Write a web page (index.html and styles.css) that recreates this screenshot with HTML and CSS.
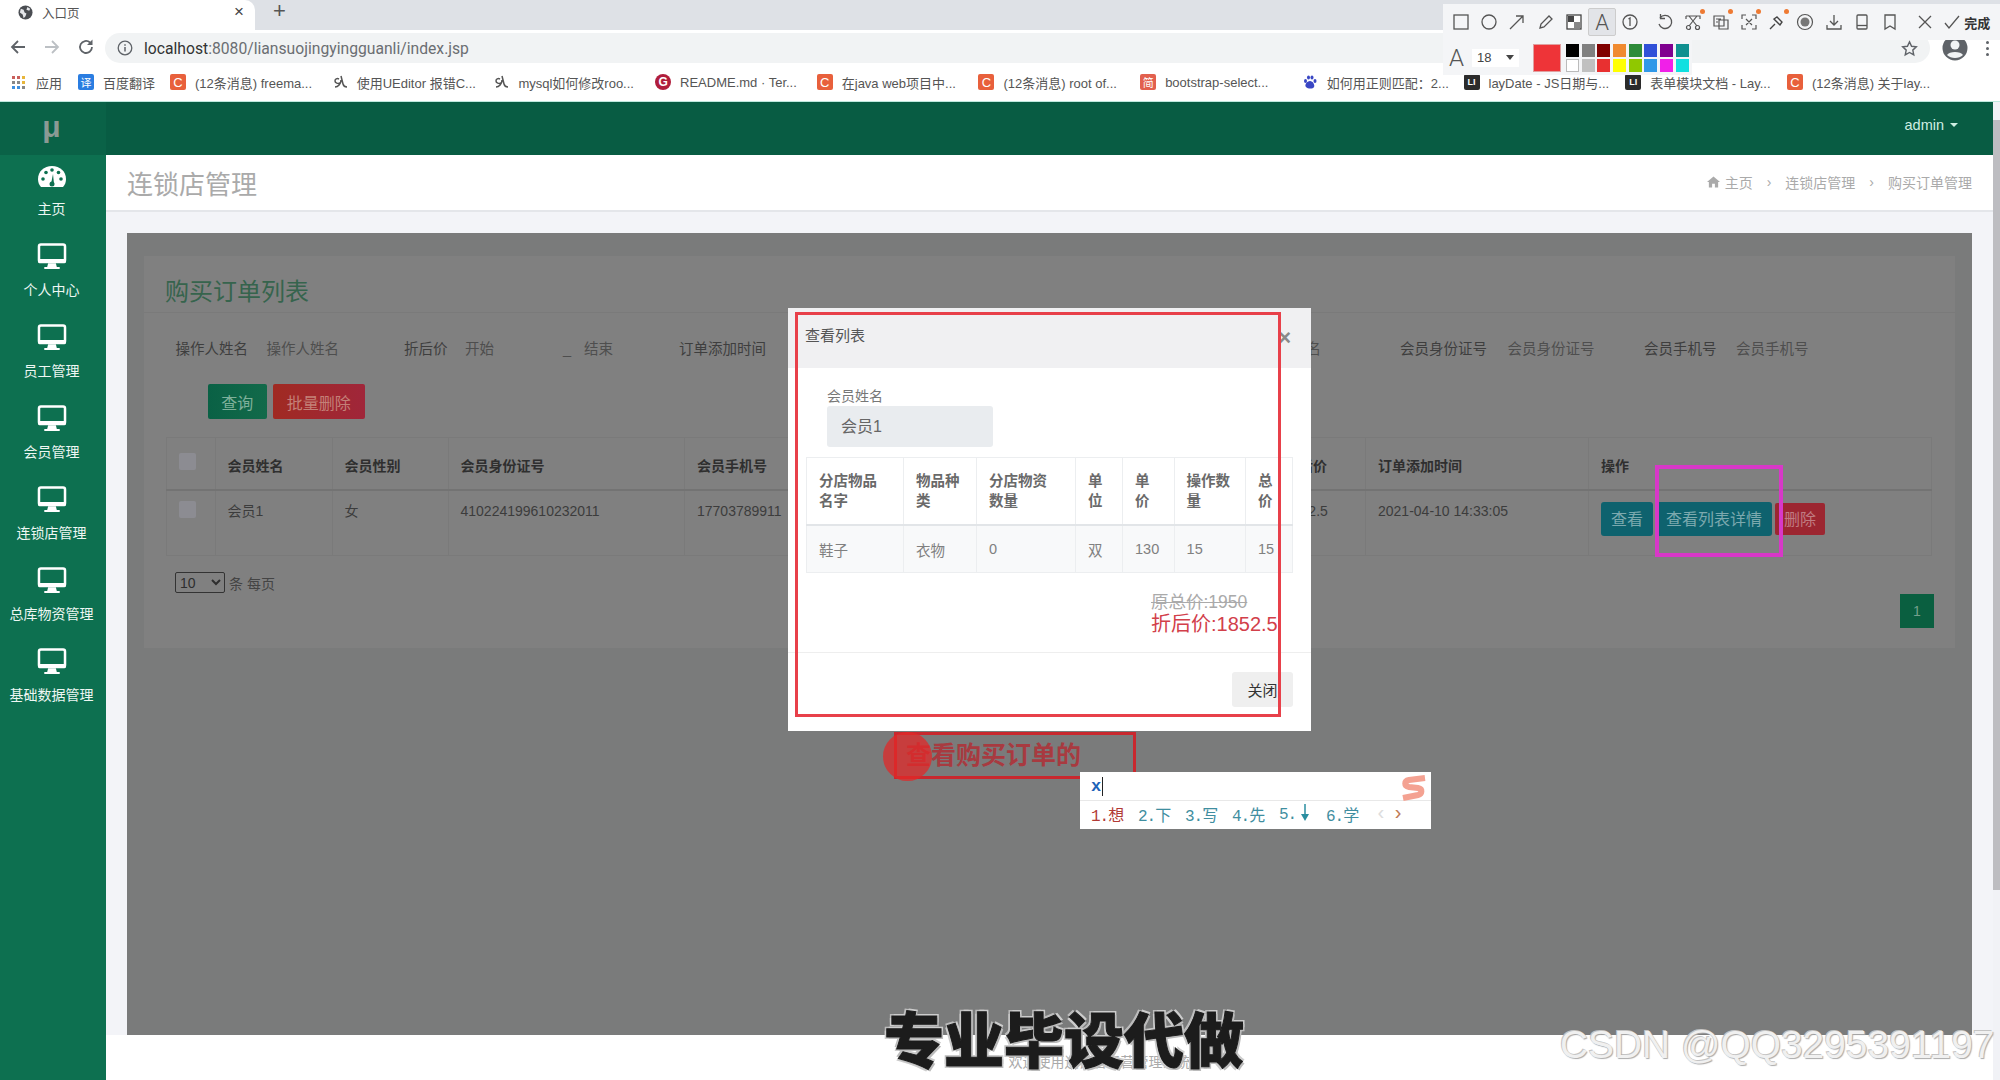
FILE: index.html
```html
<!DOCTYPE html>
<html lang="zh">
	<head>
		<meta charset="UTF-8" />
		<title>入口页</title>
		<link rel="stylesheet" href="styles.css">
	</head>
	<body>
		<svg class="sprites" width="0" height="0">
			<symbol id="monitor" viewBox="0 0 30 28">
				<rect x="1.5" y="1.5" width="27" height="18" rx="2" fill="none" stroke="#fff" stroke-width="2.6"/>
				<rect x="0.5" y="16.5" width="29" height="4.5" rx="1.5" fill="#fff"/>
				<path d="M11 21h8l1 4h3v2H7v-2h3z" fill="#fff"/>
			</symbol>
			<symbol id="gauge" viewBox="0 0 30 27">
				<path d="M4 25C2 23 1 20 1 17 1 9.500 7 4 15 4s14 5.500 14 13c0 3-1 6-3 8z" fill="#fff"/>
				<circle cx="6" cy="17" r="1.800" fill="#0d7050"/>
				<circle cx="9" cy="10.500" r="1.800" fill="#0d7050"/>
				<circle cx="15" cy="8" r="1.800" fill="#0d7050"/>
				<circle cx="21.500" cy="10.500" r="1.800" fill="#0d7050"/>
				<circle cx="24" cy="17" r="1.800" fill="#0d7050"/>
				<path d="M14 22l2-10 1 10z" fill="#0d7050"/>
				<circle cx="15" cy="22" r="2.500" fill="#0d7050"/>
			</symbol>
			<symbol id="swirl" viewBox="0 0 16 16">
				<path d="M3 13c3 0 6-3 6-7M9 2l2 8c.5 2 2 3 4 3M7 5c-2-1-4 0-4 2s3 3 5 2" fill="none" stroke="#555" stroke-width="1.500"/>
			</symbol>
		</svg>

		<div class="tabstrip">
			<div class="tab">
				<svg class="globe" width="15" height="15" viewBox="0 0 16 16"><circle cx="8" cy="8" r="7.500" fill="#4a4d52"/><path d="M3 4l3 1 1 3 2 1-1 3-2 2-1-4-3-2zM10 2l3 2-1 2-3-1z" fill="#e4e6ea"/></svg>
				<span class="tab-title">入口页</span>
				<span class="tab-close">×</span>
			</div>
			<span class="tab-new">+</span>
		</div>

		<div class="toolbar">
			<svg class="nav-icon" width="18" height="18" viewBox="0 0 18 18"><path d="M16 9H3M9 3L3 9l6 6" fill="none" stroke="#5f6368" stroke-width="1.800"/></svg>
			<svg class="nav-icon" width="18" height="18" viewBox="0 0 18 18"><path d="M2 9h13M9 3l6 6-6 6" fill="none" stroke="#bcc0c4" stroke-width="1.800"/></svg>
			<svg class="nav-icon" width="18" height="18" viewBox="0 0 18 18"><path d="M15 9a6 6 0 1 1-2-4.500" fill="none" stroke="#5f6368" stroke-width="1.800"/><path d="M15.500 1.500V7H10z" fill="#5f6368"/></svg>
			<div class="omnibox">
				<svg width="16" height="16" viewBox="0 0 16 16"><circle cx="8" cy="8" r="6.800" fill="none" stroke="#5f6368" stroke-width="1.300"/><path d="M8 7v4.500M8 4.200v1.600" stroke="#5f6368" stroke-width="1.500"/></svg>
				<span class="url"><b>localhost</b>:8080/liansuojingyingguanli/index.jsp</span>
				<svg class="star" width="17" height="17" viewBox="0 0 18 18"><path d="M9 2l2.200 4.700 5 .6-3.700 3.400 1 5L9 13.200l-4.500 2.500 1-5L1.800 7.300l5-.6z" fill="none" stroke="#5f6368" stroke-width="1.500"/></svg>
			</div>
			<svg class="avatar" width="26" height="26" viewBox="0 0 26 26"><circle cx="13" cy="13" r="12.500" fill="#5f6368"/><circle cx="13" cy="10" r="4.500" fill="#f1f3f4"/><path d="M5 20c2-4 14-4 16 0-4 4-12 4-16 0z" fill="#f1f3f4"/></svg>
			<span class="menu-dots"><i></i><i></i><i></i></span>
		</div>

		<div class="bookmarks">
			<div class="bm bm-apps"><span class="apps-grid"><i></i><i></i><i></i><i></i><i></i><i></i><i></i><i></i><i></i></span><span>应用</span></div>
			<div class="bm bm-first"><span class="fav fav-blue">译</span><span>百度翻译</span></div>
			<div class="bm"><span class="fav fav-c">C</span><span>(12条消息) freema...</span></div>
			<div class="bm"><svg class="fav" viewBox="0 0 16 16"><use href="#swirl"/></svg><span>使用UEditor 报错C...</span></div>
			<div class="bm"><svg class="fav" viewBox="0 0 16 16"><use href="#swirl"/></svg><span>mysql如何修改roo...</span></div>
			<div class="bm"><span class="fav fav-g">G</span><span>README.md · Ter...</span></div>
			<div class="bm"><span class="fav fav-c">C</span><span>在java web项目中...</span></div>
			<div class="bm"><span class="fav fav-c">C</span><span>(12条消息) root of...</span></div>
			<div class="bm"><span class="fav fav-jian">简</span><span>bootstrap-select...</span></div>
			<div class="bm"><svg class="fav" viewBox="0 0 16 16"><g fill="#3a47c4"><ellipse cx="3.500" cy="7" rx="1.500" ry="2"/><ellipse cx="6.500" cy="3.500" rx="1.500" ry="2"/><ellipse cx="10" cy="3.500" rx="1.500" ry="2"/><ellipse cx="13" cy="7" rx="1.500" ry="2"/><path d="M8 7c3 0 5 4 4 6s-6 2-8 0 1-6 4-6z"/></g></svg><span>如何用正则匹配：2...</span></div>
			<div class="bm"><span class="fav fav-li">LI</span><span>layDate - JS日期与...</span></div>
			<div class="bm"><span class="fav fav-li">LI</span><span>表单模块文档 - Lay...</span></div>
			<div class="bm"><span class="fav fav-c">C</span><span>(12条消息) 关于lay...</span></div>
		</div>

		<div class="app">
			<aside class="sidebar">
				<div class="logo">μ</div>
				<nav class="side-nav">
					<a class="side-item"><svg width="30" height="27"><use href="#gauge"/></svg><span>主页</span></a>
					<a class="side-item"><svg width="30" height="27"><use href="#monitor"/></svg><span>个人中心</span></a>
					<a class="side-item"><svg width="30" height="27"><use href="#monitor"/></svg><span>员工管理</span></a>
					<a class="side-item"><svg width="30" height="27"><use href="#monitor"/></svg><span>会员管理</span></a>
					<a class="side-item"><svg width="30" height="27"><use href="#monitor"/></svg><span>连锁店管理</span></a>
					<a class="side-item"><svg width="30" height="27"><use href="#monitor"/></svg><span>总库物资管理</span></a>
					<a class="side-item"><svg width="30" height="27"><use href="#monitor"/></svg><span>基础数据管理</span></a>
				</nav>
			</aside>

			<div class="main">
				<header class="topbar">
					<span class="user">admin</span>
					<span class="caret"></span>
				</header>
				<div class="subheader">
					<h2>连锁店管理</h2>
					<div class="crumbs">
						<svg width="13" height="12" viewBox="0 0 14 12"><path d="M7 0l7 6h-2v6H8.500V8h-3v4H2V6H0z" fill="#aaa"/></svg>
						<span>主页</span>
						<span class="crumb-sep">›</span>
						<span>连锁店管理</span>
						<span class="crumb-sep">›</span>
						<span>购买订单管理</span>
					</div>
				</div>

				<div class="content">
					<div class="frame">
						<section class="card">
							<h3 class="card-title">购买订单列表</h3>
							<div class="filters">
								<span>操作人姓名</span><span class="ph">操作人姓名</span>
								<span>折后价</span><span class="ph">开始</span><span class="ph">_</span><span class="ph">结束</span>
								<span>订单添加时间</span><span class="ph">会员姓名</span>
								<span>会员身份证号</span><span class="ph">会员身份证号</span>
								<span>会员手机号</span><span class="ph">会员手机号</span>
							</div>
							<div class="filter-actions">
								<button class="btn btn-green">查询</button>
								<button class="btn btn-red">批量删除</button>
							</div>
							<table class="orders">
								<colgroup>
									<col class="c-check"><col class="c-name"><col class="c-sex"><col class="c-id"><col class="c-phone"><col class="c-price"><col class="c-time"><col>
								</colgroup>
								<thead>
									<tr>
										<th><span class="check"></span></th>
										<th>会员姓名</th>
										<th>会员性别</th>
										<th>会员身份证号</th>
										<th>会员手机号</th>
										<th>折后价</th>
										<th>订单添加时间</th>
										<th>操作</th>
									</tr>
								</thead>
								<tbody>
									<tr>
										<td><span class="check"></span></td>
										<td>会员1</td>
										<td>女</td>
										<td>410224199610232011</td>
										<td>17703789911</td>
										<td>1852.5</td>
										<td>2021-04-10 14:33:05</td>
										<td>
											<div class="row-actions">
												<button class="btn btn-teal btn-view">查看</button>
												<button class="btn btn-teal btn-detail">查看列表详情</button>
												<button class="btn btn-del">删除</button>
											</div>
										</td>
									</tr>
								</tbody>
							</table>
							<div class="pager">
								<div class="per-page">
									<select><option>10</option></select>
									<span>条 每页</span>
								</div>
								<a class="page-btn">1</a>
							</div>
						</section>

						<div class="modal">
							<div class="modal-head">
								<span>查看列表</span>
								<span class="modal-close">×</span>
							</div>
							<div class="modal-body">
								<label>会员姓名</label>
								<div class="readonly">会员1</div>
								<table class="items">
									<colgroup>
										<col class="i1"><col class="i2"><col class="i3"><col class="i4"><col class="i5"><col class="i6"><col>
									</colgroup>
									<thead>
										<tr>
											<th>分店物品<br>名字</th>
											<th>物品种<br>类</th>
											<th>分店物资<br>数量</th>
											<th>单<br>位</th>
											<th>单<br>价</th>
											<th>操作数<br>量</th>
											<th>总<br>价</th>
										</tr>
									</thead>
									<tbody>
										<tr><td>鞋子</td><td>衣物</td><td>0</td><td>双</td><td>130</td><td>15</td><td>15</td></tr>
									</tbody>
								</table>
								<div class="totals">
									<del>原总价:1950</del>
									<strong>折后价:1852.5</strong>
								</div>
							</div>
							<div class="modal-foot">
								<button class="btn-close">关闭</button>
							</div>
						</div>
					</div>
				</div>

				<footer class="footer">欢迎使用连锁店经营管理系统</footer>
			</div>

			<div class="scrollbar"><div class="scroll-thumb"></div></div>
		</div>

		<!-- stuff from the screen recorder, sits on top of the page -->
		<div class="shot-tool">
			<div class="shot-row">
				<span class="ti"><svg width="18" height="18" viewBox="0 0 18 18"><rect x="2" y="2" width="14" height="14" fill="none" stroke="#555" stroke-width="1.300"/></svg></span>
				<span class="ti"><svg width="18" height="18" viewBox="0 0 18 18"><circle cx="9" cy="9" r="7" fill="none" stroke="#555" stroke-width="1.300"/></svg></span>
				<span class="ti"><svg width="18" height="18" viewBox="0 0 18 18"><path d="M2 16L15 3M8 3h7v7" fill="none" stroke="#555" stroke-width="1.300"/></svg></span>
				<span class="ti"><svg width="18" height="18" viewBox="0 0 18 18"><path d="M3 15l1-4 8-8 3 3-8 8z" fill="none" stroke="#555" stroke-width="1.300"/></svg></span>
				<span class="ti"><svg width="16" height="16" viewBox="0 0 16 16"><rect x="1" y="1" width="14" height="14" fill="#fff" stroke="#444" stroke-width="1.300"/><rect x="2" y="2" width="6" height="6" fill="#444"/><rect x="8" y="8" width="6" height="6" fill="#888"/></svg></span>
				<span class="ti ti-on">A</span>
				<span class="ti"><svg width="18" height="18" viewBox="0 0 18 18"><circle cx="9" cy="9" r="7" fill="none" stroke="#555" stroke-width="1.300"/><path d="M7.500 6L9 5v8" fill="none" stroke="#555" stroke-width="1.300"/></svg></span>
				<span class="ti-sep"></span>
				<span class="ti"><svg width="18" height="18" viewBox="0 0 18 18"><path d="M5 5a6.500 6.500 0 1 1-1 6" fill="none" stroke="#555" stroke-width="1.300"/><path d="M5.500 1v4.500H10" fill="none" stroke="#555" stroke-width="1.300"/></svg></span>
				<span class="ti dot"><svg width="18" height="18" viewBox="0 0 18 18"><path d="M2 3h14v3M2 3v3M5 3l8 10M13 3L5 13" fill="none" stroke="#555" stroke-width="1.200"/><circle cx="4.500" cy="14.500" r="2" fill="none" stroke="#555" stroke-width="1.200"/><circle cx="13.500" cy="14.500" r="2" fill="none" stroke="#555" stroke-width="1.200"/></svg></span>
				<span class="ti dot"><svg width="18" height="18" viewBox="0 0 18 18"><path d="M2 3h10v10H2zM7 7h9v9H7zM4 6h5M4 9h2" fill="none" stroke="#555" stroke-width="1.200"/></svg></span>
				<span class="ti dot"><svg width="18" height="18" viewBox="0 0 18 18"><path d="M2 6V2h4M16 6V2h-4M2 12v4h4M16 12v4h-4M6 6l6 6M12 6l-6 6" fill="none" stroke="#555" stroke-width="1.200"/></svg></span>
				<span class="ti dot"><svg width="18" height="18" viewBox="0 0 18 18"><path d="M2 16l5-5M6 6l6 6M9 4l5 5-2 3-6-6z" fill="none" stroke="#444" stroke-width="1.400"/></svg></span>
				<span class="ti"><svg width="18" height="18" viewBox="0 0 18 18"><circle cx="9" cy="9" r="7.500" fill="none" stroke="#555" stroke-width="1.200"/><circle cx="9" cy="9" r="4.500" fill="#777"/></svg></span>
				<span class="ti"><svg width="18" height="18" viewBox="0 0 18 18"><path d="M9 2v9M5 8l4 4 4-4M2 12v4h14v-4" fill="none" stroke="#555" stroke-width="1.300"/></svg></span>
				<span class="ti"><svg width="18" height="18" viewBox="0 0 18 18"><rect x="4" y="2" width="10" height="14" rx="1" fill="none" stroke="#555" stroke-width="1.300"/><path d="M4 12.500h10" stroke="#555" stroke-width="1.300"/></svg></span>
				<span class="ti"><svg width="18" height="18" viewBox="0 0 18 18"><path d="M4 2h10v14l-5-3-5 3z" fill="none" stroke="#555" stroke-width="1.300"/></svg></span>
				<span class="ti-sep ti-sep-wide"></span>
				<span class="ti"><svg width="16" height="16" viewBox="0 0 16 16"><path d="M2 2l12 12M14 2L2 14" stroke="#555" stroke-width="1.300"/></svg></span>
				<span class="ti ti-done"><svg width="16" height="16" viewBox="0 0 16 16"><path d="M1 9l4 5L15 2" fill="none" stroke="#555" stroke-width="1.300"/></svg><b>完成</b></span>
			</div>
			<div class="shot-opts">
				<span class="opt-a">A</span>
				<span class="opt-size">18<i></i></span>
				<span class="opt-current"></span>
				<div class="palette">
					<i class="p-black"></i><i class="p-gray"></i><i class="p-maroon"></i><i class="p-orange"></i><i class="p-green"></i><i class="p-blue"></i><i class="p-purple"></i><i class="p-teal"></i>
					<i class="p-white"></i><i class="p-silver"></i><i class="p-red"></i><i class="p-yellow"></i><i class="p-lime"></i><i class="p-sky"></i><i class="p-pink"></i><i class="p-cyan"></i>
				</div>
			</div>
		</div>

		<div class="mark-red"></div>
		<div class="mark-pink"></div>
		<div class="mark-note"><span class="mark-text">查看购买订单的</span><span class="mark-dot"></span></div>

		<div class="ime">
			<div class="ime-input"><b>x</b></div>
			<div class="ime-list">
				<span class="first">1.想</span><span>2.下</span><span>3.写</span><span>4.先</span>
				<span>5.<svg width="10" height="18" viewBox="0 0 10 18"><path d="M5 0v12" stroke="#2b8ea0" stroke-width="1.500"/><path d="M1 10h8l-4 7z" fill="#2b8ea0"/></svg></span>
				<span>6.学</span>
				<em class="ime-prev">‹</em><em class="ime-next">›</em>
			</div>
			<svg class="ime-logo" width="33" height="33" viewBox="0 0 33 33"><path d="M27 7L11 9c-5 1-5 6 0 7l9 1c5 1 4 6 0 7L5 27" fill="none" stroke="#f4a292" stroke-width="6"/></svg>
		</div>

		<div class="promo">专业毕设代做</div>
		<div class="watermark">CSDN @QQ3295391197</div>
	</body>
</html>
```

FILE: styles.css
```css
html,
body {
	margin: 0;
	padding: 0;
}

body {
	position: relative;
	width: 2000px;
	height: 1080px;
	overflow: hidden;
	background: #fff;
	font-family: "Liberation Sans", "Noto Sans CJK SC", sans-serif;
	font-size: 14px;
	color: #333;
}

.sprites {
	position: absolute;
}

/* browser chrome */
.tabstrip {
	display: flex;
	align-items: flex-end;
	height: 30px;
	background: #dee1e6;
}

.tab {
	display: flex;
	align-items: center;
	width: 255px;
	height: 30px;
	padding: 0 10px 6px 18px;
	box-sizing: border-box;
	background: #fff;
	border-radius: 0 10px 0 0;
}

.tab-title {
	margin-left: 9px;
	font-size: 12.5px;
	color: #555;
}

.tab-close {
	margin-left: auto;
	margin-right: 1px;
	font-size: 17px;
	color: #444;
}

.tab-new {
	margin: 0 0 8px 18px;
	font-size: 22px;
	line-height: 22px;
	color: #555;
}

.toolbar {
	display: flex;
	align-items: center;
	height: 33px;
	padding-left: 9px;
	background: #fff;
}

.nav-icon {
	margin-right: 16px;
}

.omnibox {
	display: flex;
	align-items: center;
	width: 1825px;
	height: 30px;
	margin: 3px 0 0 -6px;
	padding: 0 12px;
	box-sizing: border-box;
	background: #f1f3f4;
	border-radius: 15px;
}

.url {
	margin-left: 11px;
	font-family: "Roboto", sans-serif;
	font-size: 15.7px;
	color: #6b6e72;
}

.url b {
	font-weight: 400;
	color: #333;
}

.star {
	margin-left: auto;
}

.avatar {
	margin: 3px 0 0 12px;
}

.menu-dots {
	display: flex;
	flex-direction: column;
	gap: 3px;
	margin: 3px 0 0 18px;
}

.menu-dots i {
	display: block;
	width: 3px;
	height: 3px;
	background: #5f6368;
	border-radius: 50%;
}

.bookmarks {
	display: flex;
	align-items: center;
	height: 38px;
	padding-left: 12px;
	background: #fff;
	border-bottom: 1px solid #bfe8de;
	font-size: 13px;
	color: #555;
	white-space: nowrap;
}

.bm {
	display: flex;
	align-items: center;
	gap: 9px;
	flex: 0 0 auto;
	width: 161.7px;
}

.bm-apps {
	width: 66px;
	gap: 11px;
}

.bm-first {
	width: 92px;
}

.apps-grid {
	display: grid;
	grid-template-columns: repeat(3, 3px);
	gap: 2px;
}

.apps-grid i {
	display: block;
	width: 3px;
	height: 3px;
	background: #888;
}

.apps-grid i:nth-child(1), .apps-grid i:nth-child(2) {
	background: #c9605c;
}

.apps-grid i:nth-child(3), .apps-grid i:nth-child(6) {
	background: #e8b63a;
}

.apps-grid i:nth-child(7), .apps-grid i:nth-child(8) {
	background: #3d8fe0;
}

.fav {
	display: flex;
	flex: 0 0 16px;
	align-items: center;
	justify-content: center;
	width: 16px;
	height: 16px;
	font-size: 11px;
	color: #fff;
	border-radius: 2px;
}

.fav-blue {
	background: #2a7de1;
}

.fav-c {
	background: #e8603c;
	font-size: 13px;
}

.fav-g {
	background: #b01e3c;
	border-radius: 50%;
	font-weight: bold;
	font-size: 12px;
}

.fav-jian {
	background: #e2604e;
}

.fav-li {
	background: #2b2b2b;
	font-size: 9px;
	font-weight: bold;
}

/* app shell */
.app {
	display: flex;
	height: 978px;
}

.sidebar {
	flex: 0 0 106px;
	background: #0d7050;
	color: #fff;
}

.logo {
	height: 53px;
	padding-right: 3px;
	box-sizing: border-box;
	line-height: 50px;
	background: #0a6247;
	text-align: center;
	font-size: 30px;
	font-weight: bold;
	color: #8a9a94;
}

.side-nav {
	padding-top: 2px;
}

.side-item {
	display: flex;
	flex-direction: column;
	align-items: center;
	height: 81px;
	padding: 5px 3px 0 0;
	box-sizing: border-box;
}

.side-item span {
	margin-top: 10px;
	line-height: 20px;
	font-size: 14px;
	white-space: nowrap;
	color: #eef7f3;
}

.main {
	display: flex;
	flex-direction: column;
	flex: 1;
	min-width: 0;
}

.topbar {
	display: flex;
	align-items: center;
	justify-content: flex-end;
	flex: 0 0 53px;
	padding: 0 35px 7px 0;
	box-sizing: border-box;
	background: #085c43;
	color: #cfeee2;
	font-size: 14.5px;
}

.caret {
	width: 0;
	height: 0;
	margin-left: 6px;
	border: 4px solid transparent;
	border-top-color: #cfeee2;
	border-bottom-width: 0;
}

.subheader {
	display: flex;
	align-items: center;
	justify-content: space-between;
	flex: 0 0 57px;
	padding: 0 21px 1px;
	box-sizing: border-box;
	background: #fff;
	border-bottom: 2px solid #e4e6ea;
}

.subheader h2 {
	margin: 0;
	font-size: 26px;
	font-weight: 400;
	color: #aaa;
}

.crumbs {
	display: flex;
	align-items: center;
	gap: 5px;
	font-size: 14px;
	color: #aaa;
}

.crumb-sep {
	margin: 0 9px;
}

.content {
	flex: 1;
	padding: 21px 21px 0;
	background: #f3f4f8;
}

.footer {
	flex: 0 0 45px;
	padding-left: 100px;
	box-sizing: border-box;
	line-height: 55px;
	text-align: center;
	background: #fff;
	color: #aaa;
}

.scrollbar {
	flex: 0 0 7px;
	padding-top: 18px;
	box-sizing: border-box;
	background: #f1f2f6;
}

.scroll-thumb {
	height: 770px;
	background: #bdbdc1;
}

/* page behind the dialog, already dimmed */
.frame {
	position: relative;
	height: 802px;
	padding: 23px 17px 0;
	box-sizing: border-box;
	background: #7a7b7b;
}

.card {
	height: 392px;
	background: #808080;
}

.card-title {
	margin: 0;
	padding: 19px 0 0 21px;
	height: 57px;
	box-sizing: border-box;
	font-size: 24px;
	line-height: 34px;
	font-weight: 400;
	color: #36644d;
	border-bottom: 1px solid #7a7a7a;
}

.filters {
	display: grid;
	grid-template-columns: 91px 137.5px 61px 98px 21px 95px 584px 137px 107.6px 136.4px 92px 1fr;
	margin: 24px 0 0 31.5px;
	line-height: 24px;
	font-size: 14.5px;
	color: #3e3e3e;
}

.filters .ph {
	color: #4e4e4e;
}

.filter-actions {
	display: flex;
	gap: 6px;
	margin: 23px 0 0 64px;
}

.btn {
	border: none;
	font: inherit;
	font-size: 16px;
	padding: 0;
}

.btn-green {
	width: 58.6px;
	height: 35px;
	background: linear-gradient(90deg, #0a6145, #126a4a);
	color: #7fb09a;
	border-radius: 2px;
}

.btn-red {
	width: 92.4px;
	height: 35px;
	background: linear-gradient(90deg, #a02a22, #a0263a);
	color: #c48078;
	border-radius: 2px;
}

.orders {
	width: 1766.5px;
	margin: 18px 0 0 21.5px;
	table-layout: fixed;
	border-collapse: collapse;
	color: #3c3c3c;
}

.c-check { width: 49px; }
.c-name { width: 117px; }
.c-sex { width: 116px; }
.c-id { width: 236.500px; }
.c-phone { width: 588px; }
.c-price { width: 93px; }
.c-time { width: 223px; }

.orders th,
.orders td {
	border: 1px solid #7a7a7a;
	text-align: left;
	vertical-align: top;
	line-height: 21px;
	white-space: nowrap;
	overflow: hidden;
}

.orders th {
	padding: 18px 12px 12px;
	border-bottom: 2px solid #737373;
	color: #2f2f2f;
}

.orders td {
	padding: 10px 12px 33px;
}

.orders th:first-child,
.orders td:first-child {
	padding-left: 12px;
}

.orders th .check {
	margin-top: -3px;
}

.check {
	display: block;
	width: 17px;
	height: 17px;
	background: #8c8c92;
	border-radius: 2px;
}

.orders td:last-child {
	padding: 11px 0 0 12px;
}

.row-actions {
	display: flex;
	align-items: center;
	gap: 3px;
}

.btn-teal {
	height: 34px;
	background: #0e626e;
	color: #7ca9ae;
	border-radius: 3px;
}

.btn-view {
	width: 52px;
}

.btn-detail {
	width: 116px;
}

.btn-del {
	width: 50px;
	height: 32px;
	background: #9c2631;
	color: #c07c82;
	border-radius: 2px;
}

.pager {
	display: flex;
	align-items: flex-start;
	justify-content: space-between;
	margin: 16px 21px 0 31px;
}

.per-page {
	display: flex;
	align-items: center;
	gap: 4px;
	color: #444;
}

.per-page select {
	width: 50px;
	height: 21px;
	background: #808080;
	border: 1px solid #333;
	border-radius: 2px;
	font: 14px "Liberation Sans", sans-serif;
	color: #2e2e2e;
}

.page-btn {
	width: 34px;
	height: 34px;
	margin-top: 22px;
	line-height: 34px;
	text-align: center;
	background: #0a5f40;
	color: #759f8c;
}

/* dialog */
.modal {
	position: absolute;
	left: 661px;
	top: 75px;
	display: flex;
	flex-direction: column;
	width: 523px;
	height: 423px;
	background: #fff;
}

.modal-head {
	display: flex;
	justify-content: space-between;
	flex: 0 0 60px;
	padding: 17px 18px 0 17px;
	box-sizing: border-box;
	background: #f0f0f2;
	font-size: 15px;
	line-height: 22px;
	color: #555;
}

.modal-close {
	margin-right: 2px;
	font-size: 22px;
	font-weight: bold;
	color: #888;
	line-height: 26px;
}

.modal-body {
	flex: 0 0 285px;
	padding: 18px 18px 0;
	box-sizing: border-box;
	border-bottom: 1px solid #eee;
}

.modal-body label {
	display: block;
	margin-left: 21px;
	line-height: 20px;
	color: #777;
}

.readonly {
	width: 166px;
	height: 41px;
	margin: 0 0 10px 21px;
	padding-left: 14px;
	box-sizing: border-box;
	background: #e9ecef;
	border-radius: 3px;
	font-size: 16px;
	line-height: 41px;
	color: #666;
}

.items {
	width: 487px;
	table-layout: fixed;
	border-collapse: collapse;
	font-size: 14.5px;
}

.i1 { width: 97px; }
.i2 { width: 73px; }
.i3 { width: 99px; }
.i4 { width: 47px; }
.i5 { width: 51.600px; }
.i6 { width: 71.400px; }

.items th,
.items td {
	padding: 0 0 0 12px;
	border: 1px solid #eceef0;
	text-align: left;
}

.items th {
	height: 66px;
	line-height: 20.500px;
	border-bottom: 2px solid #e2e5e8;
	color: #6a6a6a;
}

.items td {
	height: 46px;
	background: #f8f9fa;
	color: #808080;
}

.totals {
	display: flex;
	flex-direction: column;
	margin: 18px 0 0 345px;
	white-space: nowrap;
}

.totals del {
	font-size: 17.500px;
	line-height: 22px;
	color: #aaa;
}

.totals strong {
	font-size: 20px;
	line-height: 22px;
	font-weight: 400;
	color: #d2404a;
}

.modal-foot {
	display: flex;
	justify-content: flex-end;
	padding: 19px 18px 0 0;
}

.btn-close {
	width: 61px;
	height: 35px;
	padding: 0;
	background: #efefef;
	border: none;
	border-radius: 3px;
	font: inherit;
	font-size: 15px;
	color: #333;
}

/* screenshot tool */
.shot-tool {
	position: absolute;
	left: 1443px;
	top: 4px;
}

.shot-row {
	display: flex;
	align-items: center;
	width: 557px;
	height: 36px;
	padding-left: 4px;
	box-sizing: border-box;
	background: #f4f5f7;
}

.ti {
	position: relative;
	display: flex;
	align-items: center;
	justify-content: center;
	flex: 0 0 28.2px;
	height: 28px;
	box-sizing: border-box;
}

.ti-on {
	font-family: "Roboto", sans-serif;
	font-size: 22px;
	font-weight: 300;
	color: #555;
	background: #e2e4e8;
	border: 1px solid #ccc;
	border-radius: 2px;
}

.ti-sep {
	flex: 0 0 6px;
}

.ti-sep-wide {
	flex-basis: 7px;
}

.ti.dot::after {
	content: "";
	position: absolute;
	top: 1px;
	right: 2px;
	width: 5px;
	height: 5px;
	background: #ee7a33;
	border-radius: 50%;
}

.ti-done {
	flex: 0 0 auto;
	gap: 4px;
	margin-left: 5px;
}

.ti-done b {
	font-size: 13px;
	color: #333;
}

.shot-opts {
	display: flex;
	align-items: center;
	width: 249px;
	height: 35px;
	padding-left: 6px;
	box-sizing: border-box;
	background: #f4f5f7;
}

.opt-a {
	font-family: "Roboto", sans-serif;
	font-size: 24px;
	font-weight: 300;
	color: #555;
}

.opt-size {
	display: flex;
	align-items: center;
	justify-content: space-between;
	width: 47px;
	height: 18px;
	margin-left: 8px;
	padding: 0 5px;
	box-sizing: border-box;
	background: #fff;
	font-size: 13px;
	color: #444;
}

.opt-size i {
	width: 0;
	height: 0;
	border: 4px solid transparent;
	border-top: 5px solid #444;
	border-bottom-width: 0;
}

.opt-current {
	width: 28px;
	height: 28px;
	margin-left: 14px;
	background: #ee3438;
	box-sizing: border-box;
	border: 1px solid #e0a0a0;
}

.palette {
	display: grid;
	grid-template-columns: repeat(8, 13px);
	grid-auto-rows: 13px;
	gap: 2px 2.700px;
	margin-left: 5px;
}

.palette i {
	display: block;
}

.p-black { background: #000; }
.p-gray { background: #808080; }
.p-maroon { background: #800000; }
.p-orange { background: #f08a30; }
.p-green { background: #2e8b3a; }
.p-blue { background: #3050d8; }
.p-purple { background: #800090; }
.p-teal { background: #109090; }
.p-white { background: #fff; border: 1px solid #bbb; }
.p-silver { background: #c0c0c0; }
.p-red { background: #e83030; }
.p-yellow { background: #ffff00; }
.p-lime { background: #90c800; }
.p-sky { background: #3098e8; }
.p-pink { background: #f020e8; }
.p-cyan { background: #10e0e0; }

/* annotations drawn over the recording */
.mark-red {
	position: absolute;
	left: 795px;
	top: 312px;
	width: 486px;
	height: 405px;
	box-sizing: border-box;
	border: 3px solid #e8404a;
}

.mark-pink {
	position: absolute;
	left: 1655px;
	top: 465px;
	width: 128px;
	height: 92px;
	box-sizing: border-box;
	border: 4px solid #d838c8;
}

.mark-note {
	position: absolute;
	left: 894px;
	top: 732px;
	width: 242px;
	height: 47px;
	box-sizing: border-box;
	border: 3px solid #c9282e;
}

.mark-dot {
	position: absolute;
	left: -14px;
	top: -3px;
	width: 49px;
	height: 49px;
	background: rgba(225, 40, 40, 0.75);
	border-radius: 50%;
}

.mark-text {
	position: absolute;
	left: 9px;
	top: 3px;
	font-size: 25px;
	line-height: 34px;
	font-weight: bold;
	white-space: nowrap;
	color: #a83a40;
}

.ime {
	position: absolute;
	left: 1080px;
	top: 772px;
	width: 351px;
	height: 57px;
	background: #fff;
}

.ime-input {
	height: 28px;
	padding-left: 11px;
	line-height: 30px;
	border-bottom: 1px solid #e8e8e8;
	font-family: "Liberation Mono", monospace;
	font-size: 17px;
}

.ime-input b {
	color: #1d63b8;
	padding-right: 1px;
	border-right: 1px solid #222;
}

.ime-list {
	display: flex;
	align-items: center;
	height: 26px;
	padding-left: 11px;
	font-family: "Liberation Mono", "Noto Sans CJK SC", monospace;
	font-size: 16px;
	color: #3f8ea0;
}

.ime-list span {
	flex: 0 0 47px;
	white-space: nowrap;
	letter-spacing: -1px;
}

.ime-list span svg {
	margin-left: 4px;
	vertical-align: -3px;
}

.ime-list .first {
	color: #b23a36;
}

.ime-list em {
	font-style: normal;
	font-size: 20px;
	line-height: 20px;
}

.ime-prev {
	margin-left: 2px;
	color: #ddd;
}

.ime-next {
	margin-left: 5px;
	color: #c07a55;
}

.ime-logo {
	position: absolute;
	right: 0;
	top: -1px;
}

.promo {
	position: absolute;
	left: 884px;
	top: 995px;
	font-family: "Noto Sans CJK SC", sans-serif;
	font-size: 60px;
	line-height: 84px;
	font-weight: 900;
	white-space: nowrap;
	color: #1c1c1c;
	-webkit-text-stroke: 1px #1c1c1c;
	text-shadow: 2px 2px 0 #bbb, -2px 2px 0 #ccc, 2px -2px 0 #ccc, -2px -2px 0 #bbb;
}

.watermark {
	position: absolute;
	left: 1560px;
	top: 1023px;
	font-family: "Liberation Sans", sans-serif;
	font-size: 38.900px;
	line-height: 44px;
	white-space: nowrap;
	color: #f0f0f0;
	text-shadow: 1px 1px 1px #aaa, -1px -1px 0 #c4c4c4;
}
```
